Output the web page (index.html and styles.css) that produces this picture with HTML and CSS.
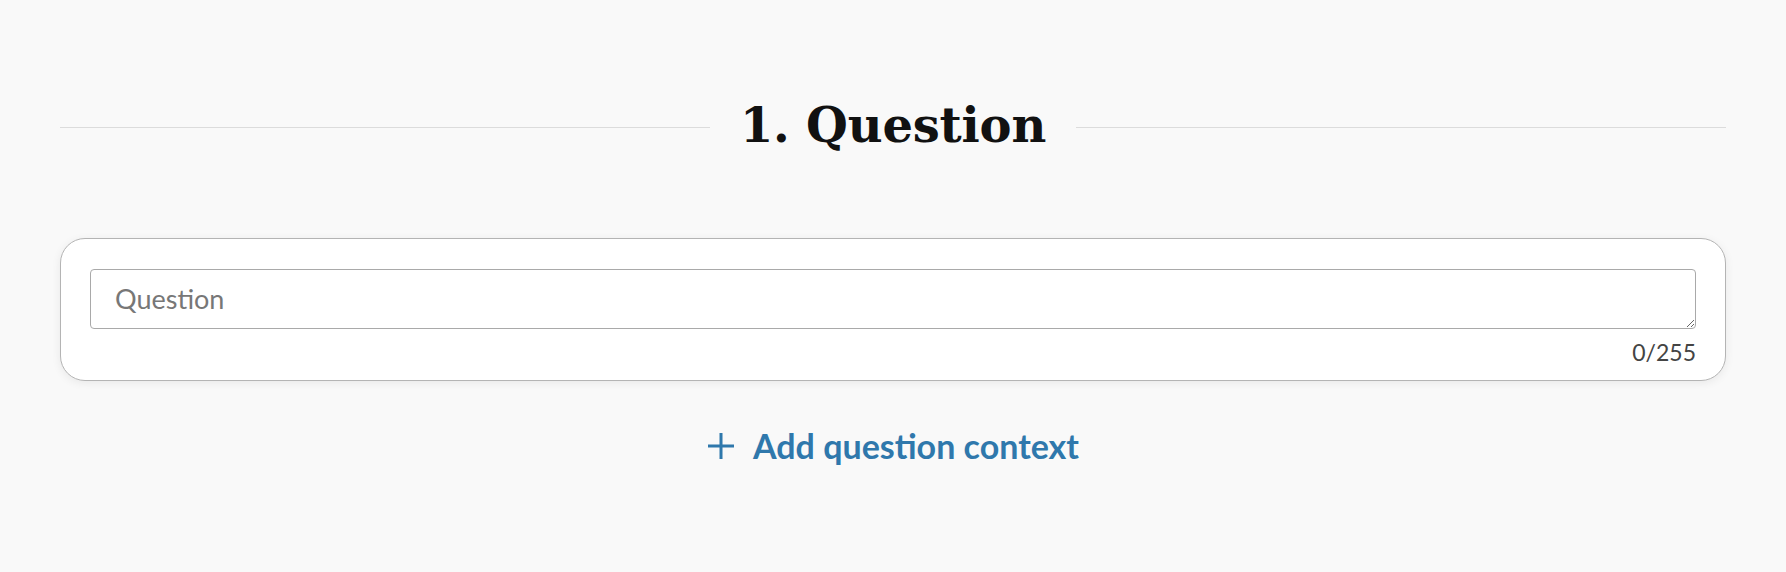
FILE: index.html
```html
<!DOCTYPE html>
<html lang="en">
<head>
<meta charset="utf-8">
<title>Question</title>
<link rel="stylesheet" href="styles.css">
</head>
<body>
<main class="page">
  <header class="section-head">
    <span class="rule"></span>
    <h1 class="section-title">1. Question</h1>
    <span class="rule"></span>
  </header>
  <section class="card">
    <textarea class="question-input" placeholder="Question" maxlength="255"></textarea>
    <div class="counter">0/255</div>
  </section>
  <div class="actions">
    <button class="add-context" type="button">
      <svg class="plus" viewBox="0 0 28 28" aria-hidden="true"><path d="M14 1v26M1 14h26"/></svg>
      <span>Add question context</span>
    </button>
  </div>
</main>
</body>
</html>
```
FILE: styles.css
```css
html, body {
  margin: 0;
  padding: 0;
  background: #f9f9f9;
}
body {
  font-family: Lato, "Open Sans", sans-serif;
  color: #222;
}
.page {
  padding: 97px 60px 0;
}
.section-head {
  display: flex;
  align-items: center;
  gap: 30px;
}
.rule {
  flex: 1;
  height: 1px;
  background: #dcdcdc;
  margin-top: 4px;
}
.section-title {
  margin: 0;
  font-family: "DejaVu Serif", serif;
  font-weight: bold;
  font-size: 48px;
  line-height: normal;
  letter-spacing: -0.2px;
  color: #111;
}
.card {
  margin-top: 85px;
  background: #fff;
  border: 1px solid #b4b4b4;
  border-radius: 25px;
  padding: 30px 29px 14px;
  box-shadow: 0 2px 10px rgba(0, 0, 0, 0.07);
}
.question-input {
  display: block;
  box-sizing: border-box;
  width: 100%;
  height: 60px;
  margin: 0;
  padding: 9px 24px 10px;
  border: 1px solid #a9a9a9;
  border-radius: 4px;
  font-family: Lato, sans-serif;
  font-size: 27px;
  line-height: 39px;
  color: #222;
  background: #fff;
  outline: none;
}
.question-input::placeholder {
  color: #777;
}
.counter {
  margin-top: 10px;
  text-align: right;
  font-size: 23px;
  line-height: 27px;
  color: #444;
}
.actions {
  display: flex;
  justify-content: center;
  margin-top: 44px;
}
.add-context {
  display: flex;
  align-items: center;
  gap: 18px;
  padding: 0;
  border: 0;
  background: none;
  font-family: Lato, sans-serif;
  font-weight: bold;
  font-size: 34px;
  line-height: normal;
  color: #2f78ac;
  cursor: pointer;
}
.plus {
  width: 28px;
  height: 28px;
  fill: none;
  stroke: #2f78ac;
  stroke-width: 3;
}
```
